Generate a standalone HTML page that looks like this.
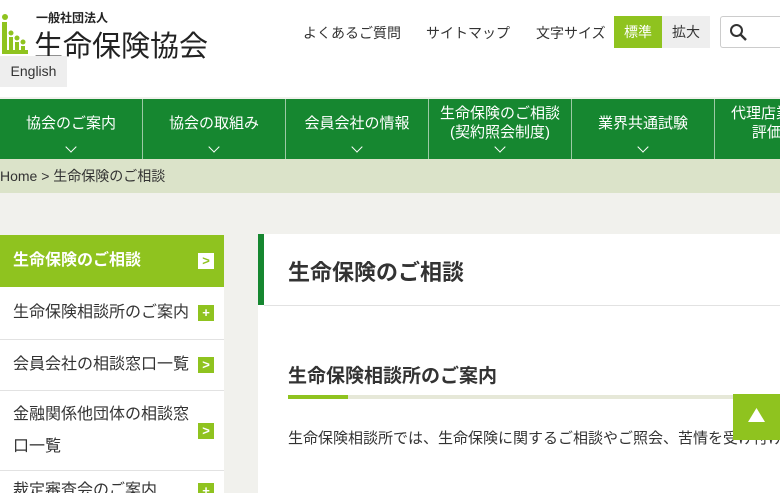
<!DOCTYPE html><html><head><meta charset="utf-8"><style>
*{margin:0;padding:0;box-sizing:border-box}
html,body{width:780px;height:493px;overflow:hidden}
body{background:#f1f1ed;font-family:"Liberation Sans","Noto Sans CJK JP",sans-serif;color:#333;position:relative}
.a{position:absolute}
.hdr{left:0;top:0;width:780px;height:97px;background:#fff}
.nav{left:0;top:99px;width:780px;height:60px;background:#168730;display:flex;overflow:hidden}
.nav div{width:143px;border-right:1px solid #9cc9a5;color:#fff;font-size:15px;text-align:center;position:relative;flex:none;line-height:19px}
.nav div i{position:absolute;left:50%;bottom:8px;width:8px;height:8px;border-right:1px solid #fff;border-bottom:1px solid #fff;transform:translateX(-50%) rotate(45deg)}
.bc{left:0;top:159px;width:780px;height:34px;background:#dbe3c9;font-size:14px;line-height:34px;color:#333}
.side{left:0;top:235px;width:224px;height:258px;overflow:hidden;background:#fff}
.side div{border-bottom:1px solid #e2e2e2;font-size:16px;padding:0 28px 0 13px;position:relative;display:flex;align-items:center;line-height:32px;white-space:normal}
.side b.ic{position:absolute;right:10px;top:50%;margin-top:-8px;width:16px;height:16px;background:#8fc31f;color:#fff;font-size:13px;line-height:16px;text-align:center;font-weight:bold}
.main{left:258px;top:234px;width:522px;height:259px;background:#fff;overflow:hidden}
</style></head><body>
<div class="a hdr"></div>
<svg class="a" style="left:2px;top:13px" width="26" height="41" viewBox="0 0 26 41"><circle cx="3" cy="4" r="3" fill="#8fc31f"/><rect x="0" y="9" width="5" height="32" fill="#8fc31f"/><circle cx="9" cy="20" r="2.5" fill="#8fc31f"/><rect x="7" y="24" width="4" height="14" fill="#8fc31f"/><circle cx="15" cy="25" r="2.5" fill="#8fc31f"/><rect x="13" y="29" width="4" height="9" fill="#8fc31f"/><circle cx="21" cy="29" r="2.5" fill="#8fc31f"/><rect x="19" y="33" width="4" height="5" fill="#8fc31f"/><rect x="0" y="37" width="26" height="4" fill="#8fc31f"/></svg>
<div class="a" style="left:36px;top:9px;font-size:12px;font-weight:bold;color:#222">一般社団法人</div>
<div class="a" style="left:34px;top:23px;font-size:29px;color:#222">生命保険協会</div>
<div class="a" style="left:0;top:56px;width:67px;height:31px;background:#eee;font-size:14px;line-height:31px;text-align:center">English</div>
<div class="a" style="left:303px;top:23px;font-size:14px">よくあるご質問</div>
<div class="a" style="left:426px;top:23px;font-size:14px">サイトマップ</div>
<div class="a" style="left:536px;top:23px;font-size:14px">文字サイズ</div>
<div class="a" style="left:614px;top:16px;width:48px;height:32px;background:#8fc31f;color:#fff;font-size:14px;line-height:32px;text-align:center">標準</div>
<div class="a" style="left:662px;top:16px;width:48px;height:32px;background:#eee;font-size:14px;line-height:32px;text-align:center">拡大</div>
<div class="a" style="left:720px;top:16px;width:60px;height:32px;border:1px solid #ccc;border-right:none;border-radius:3px 0 0 3px;background:#fff"></div>
<svg class="a" style="left:729px;top:23px" width="19" height="19" viewBox="0 0 19 19"><circle cx="7.5" cy="7.5" r="5.5" fill="none" stroke="#333" stroke-width="2"/><path d="M11.5 11.5L17 17" stroke="#333" stroke-width="2.4"/></svg>
<div class="a nav">
<div style="padding-top:15px">協会のご案内<i></i></div>
<div style="padding-top:15px">協会の取組み<i></i></div>
<div style="padding-top:15px">会員会社の情報<i></i></div>
<div style="padding-top:5px">生命保険のご相談<br>(契約照会制度)<i></i></div>
<div style="padding-top:15px">業界共通試験<i></i></div>
<div style="padding-top:5px;text-align:left;padding-left:16px;white-space:nowrap">代理店業務品質<br>&nbsp;&nbsp;&nbsp;&nbsp;&nbsp;評価</div>
</div>
<div class="a bc">Home &gt; 生命保険のご相談</div>
<div class="a side">
<div style="height:52px;background:#8fc31f;color:#fff;font-weight:bold;border:none">生命保険のご相談<b class="ic" style="background:#fff;color:#8fc31f">&gt;</b></div>
<div style="height:53px;white-space:nowrap">生命保険相談所のご案内<b class="ic">+</b></div>
<div style="height:51px;white-space:nowrap">会員会社の相談窓口一覧<b class="ic">&gt;</b></div>
<div style="height:80px">金融関係他団体の相談窓<br>口一覧<b class="ic">&gt;</b></div>
<div style="height:40px;align-items:flex-start;padding-top:4px;white-space:nowrap">裁定審査会のご案内<b class="ic">+</b></div>
</div>
<div class="a main">
<div class="a" style="left:30px;top:193px;font-size:15px;white-space:nowrap">生命保険相談所では、生命保険に関するご相談やご照会、苦情を受け付けています。</div>
</div>
<div class="a" style="left:258px;top:234px;width:6px;height:71px;background:#168730"></div>
<div class="a" style="left:264px;top:305px;width:516px;height:1px;background:#e2e2e2"></div>
<div class="a" style="left:288px;top:255px;font-size:22px;font-weight:bold;color:#333">生命保険のご相談</div>
<div class="a" style="left:288px;top:361px;font-size:19px;font-weight:bold;color:#333">生命保険相談所のご案内</div>
<div class="a" style="left:288px;top:395px;width:492px;height:4px;background:#e6e8d8"></div>
<div class="a" style="left:288px;top:395px;width:60px;height:4px;background:#8fc31f"></div>
<div class="a" style="left:733px;top:394px;width:47px;height:46px;background:#8fc31f"></div>
<svg class="a" style="left:748px;top:408px" width="17" height="14"><path d="M8.5 0L17 14H0Z" fill="#fff"/></svg>
</body></html>
